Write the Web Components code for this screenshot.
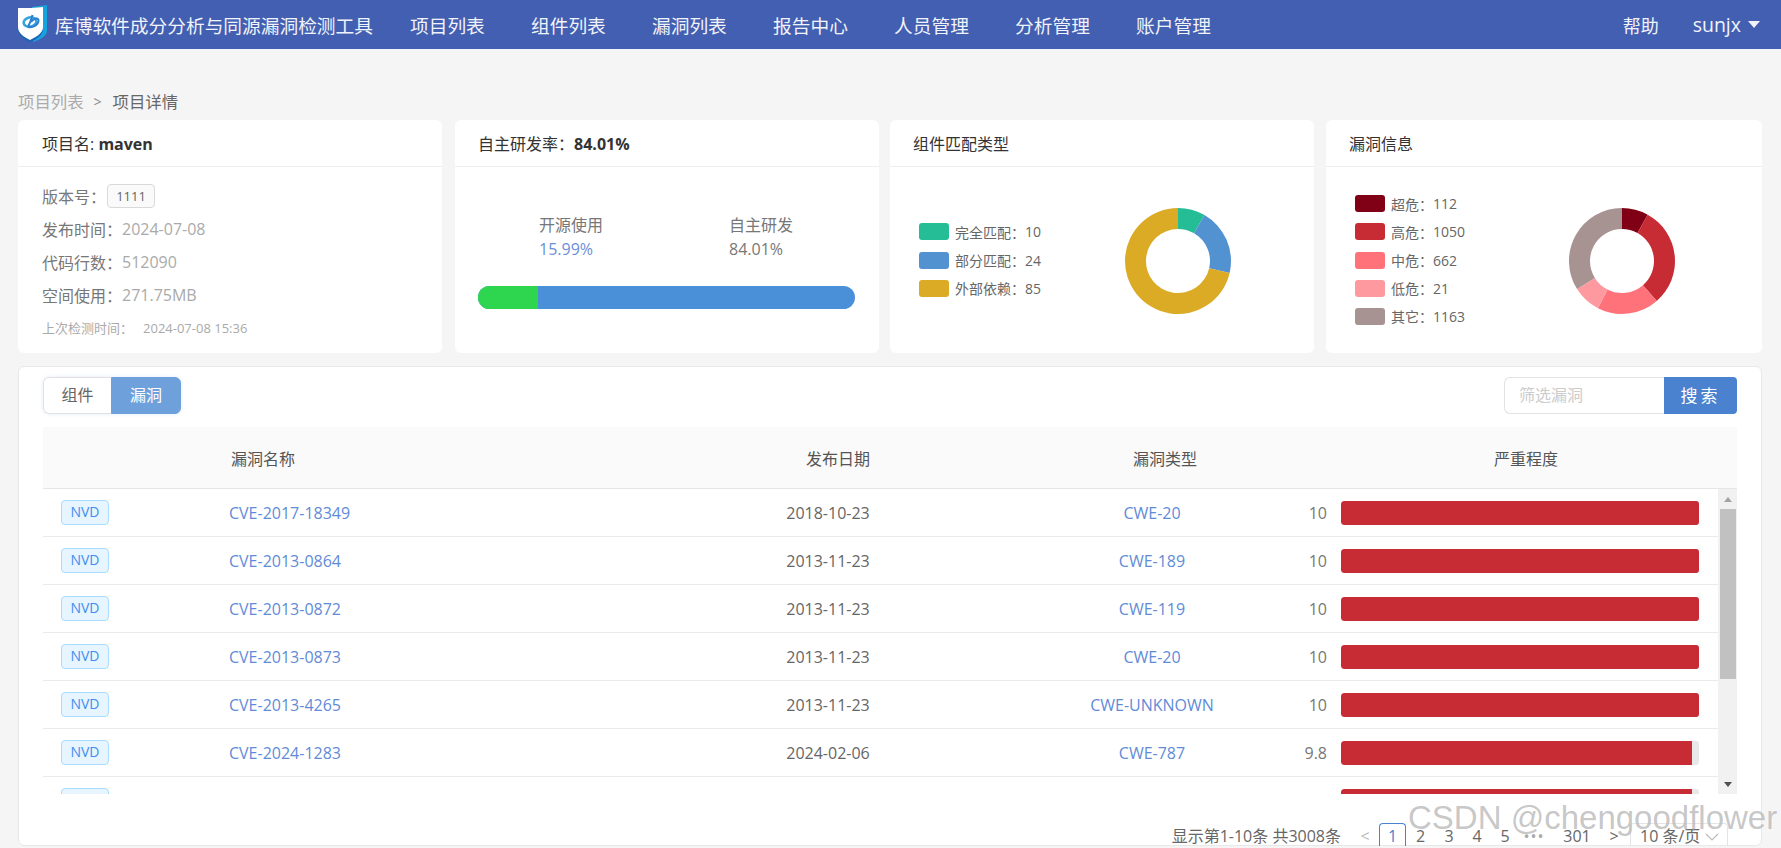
<!DOCTYPE html>
<html lang="zh-CN">
<head>
<meta charset="utf-8">
<title>项目详情</title>
<style>
    html, body {
        margin: 0;
        height: 848px;
        overflow: hidden;
        background: #f5f5f5;
        color: #666;
        font: 16px "Open Sans", "Noto Sans CJK SC", sans-serif;
    }
</style>
</head>
<body>
<app-header></app-header>
<bread-crumb></bread-crumb>
<summary-row>
    <info-card>
        <span slot="title">项目名: <b>maven</b></span>
        <project-info></project-info>
    </info-card>
    <info-card class="nudged" style="--head-pad: 23px">
        <span slot="title">自主研发率：<b>84.01%</b></span>
        <dev-rate></dev-rate>
    </info-card>
    <info-card style="--head-pad: 23px">
        <span slot="title">组件匹配类型</span>
        <donut-panel data-kind="match"></donut-panel>
    </info-card>
    <info-card style="--head-pad: 23px">
        <span slot="title">漏洞信息</span>
        <donut-panel data-kind="vuln"></donut-panel>
    </info-card>
</summary-row>
<vuln-panel></vuln-panel>
<water-mark></water-mark>

<script>
class AppHeader extends HTMLElement {
    constructor() {
        super()
        this.shadow = this.attachShadow({ mode: 'open' })
        var items = ['项目列表', '组件列表', '漏洞列表', '报告中心', '人员管理', '分析管理', '账户管理']
        this.shadow.innerHTML = `
<style>
    :host {
        display: flex;
        align-items: center;
        height: 49px;
        box-sizing: border-box;
        background: #435fb1;
        color: #f1f3fa;
        font-size: 18.72px;
    }
    svg { margin-left: 16px; flex: none; }
    .title { margin-left: 7px; }
    nav { display: flex; gap: 46.2px; margin-left: 37px; }
    .right { display: flex; align-items: center; margin-left: auto; padding-right: 21px; font-size: 18px; }
    .user { margin-left: 34px; font-size: 19.5px; }
    .caret {
        margin-left: 7px;
        border-left: 6px solid transparent;
        border-right: 6px solid transparent;
        border-top: 7px solid #f1f3fa;
    }
</style>
<svg width="32" height="40" viewBox="0 0 32 40">
    <path d="M16 2 L31 0 V26 C31 31 23 35 17 37 Z" fill="#14a3dc"/>
    <path d="M2 4 C10 4 20 3 27 2 V24 C27 30 20 35 14 37 C8 35 2 30 2 24 Z" fill="#1f63b5"/>
    <path d="M2 3 C10 3 20 3 27 2 V22 C27 28 20 32 14 35 C8 32 2 28 2 22 Z" fill="#fff"/>
    <ellipse cx="14" cy="17" rx="6.5" ry="4.6" fill="none" stroke="#35a5df" stroke-width="2.6" transform="rotate(-12 14 17)"/>
    <path d="M16.5 10 C15.5 14 14 18 12 22 M15 17 C18 13 23 12 22.5 16 C22 20 17 23 12 22" fill="none" stroke="#2a7fcf" stroke-width="2"/>
</svg>
<span class="title">库博软件成分分析与同源漏洞检测工具</span>
<nav>${items.map(item => `<span>${item}</span>`).join('')}</nav>
<div class="right">
    <span>帮助</span>
    <span class="user">sunjx</span>
    <span class="caret"></span>
</div>
`
    }
}

class BreadCrumb extends HTMLElement {
    constructor() {
        super()
        this.shadow = this.attachShadow({ mode: 'open' })
        this.shadow.innerHTML = `
<style>
    :host {
        display: flex;
        margin: 41px 0 6px 18px;
        height: 24px;
        line-height: 24px;
        font-size: 16.4px;
        color: #aaa;
    }
    .sep { margin: 0 11px 0 10px; color: #888; font-size: 14px; }
    .current { color: #666; }
</style>
<span>项目列表</span><span class="sep">&gt;</span><span class="current">项目详情</span>
`
    }
}

class SummaryRow extends HTMLElement {
    constructor() {
        super()
        this.shadow = this.attachShadow({ mode: 'open' })
        this.shadow.innerHTML = `
<style>
    :host {
        display: grid;
        grid-template-columns: 424px 424px 424px 436px;
        gap: 12px;
        margin-left: 18px;
        height: 233px;
    }
    /* the second card sits a pixel right of the even grid in the reference */
    ::slotted(.nudged) { margin: 0 -1px 0 1px; }
</style>
<slot></slot>
`
    }
}

class InfoCard extends HTMLElement {
    constructor() {
        super()
        this.shadow = this.attachShadow({ mode: 'open' })
        this.shadow.innerHTML = `
<style>
    :host {
        display: flex;
        flex-direction: column;
        background: #fff;
        border-radius: 6px;
        overflow: hidden;
    }
    .head {
        height: 46px;
        line-height: 48px;
        padding-left: var(--head-pad, 24px);
        border-bottom: 1px solid #eee;
        color: #333;
        flex: none;
    }
    ::slotted(span) { white-space: nowrap; font-weight: 400; }
    .body { flex: 1; min-height: 0; }
</style>
<div class="head"><slot name="title"></slot></div>
<div class="body"><slot></slot></div>
`
    }
}

class ProjectInfo extends HTMLElement {
    constructor() {
        super()
        this.shadow = this.attachShadow({ mode: 'open' })
        this.shadow.innerHTML = `
<style>
    :host { display: block; padding: 12px 0 0 24px; color: #777; }
    .row { display: flex; align-items: center; height: 33px; white-space: nowrap; }
    .val { color: #aaa; }
    .tag {
        box-sizing: border-box;
        width: 48px;
        height: 24px;
        line-height: 22px;
        margin-left: 1px;
        text-align: center;
        font-size: 13px;
        color: #666;
        background: #fafafa;
        border: 1px solid #d9d9d9;
        border-radius: 4px;
    }
    .last { font-size: 13px; color: #aaa; }
    .last span { margin-left: 10px; }
</style>
<div class="row">版本号：<span class="tag">1111</span></div>
<div class="row">发布时间：<span class="val">2024-07-08</span></div>
<div class="row">代码行数：<span class="val">512090</span></div>
<div class="row">空间使用：<span class="val">271.75MB</span></div>
<div class="row last">上次检测时间：<span>2024-07-08 15:36</span></div>
`
    }
}

class DevRate extends HTMLElement {
    constructor() {
        super()
        this.shadow = this.attachShadow({ mode: 'open' })
        this.shadow.innerHTML = `
<style>
    :host { display: block; padding: 46px 24px 0 23px; color: #777; }
    .cols { display: flex; padding-left: 61px; }
    .col { flex: none; width: 190px; line-height: 24px; }
    .blue { color: #6c8fd8; }
    .bar {
        display: flex;
        height: 23px;
        margin-top: 25px;
        border-radius: 12px;
        overflow: hidden;
        background: #4a90d9;
    }
    .bar i { display: block; width: 60px; background: #2dd64e; }
</style>
<div class="cols">
    <div class="col">开源使用<br><span class="blue">15.99%</span></div>
    <div class="col">自主研发<br>84.01%</div>
</div>
<div class="bar"><i></i></div>
`
    }
}

var donutData = {
    match: {
        pad: 81,
        slices: [
            { label: '完全匹配', value: 10, color: '#25bd96', end: 30 },
            { label: '部分匹配', value: 24, color: '#5292d0', end: 103 },
            { label: '外部依赖', value: 85, color: '#dcab25', end: 360 },
        ],
    },
    vuln: {
        pad: 85,
        slices: [
            { label: '超危', value: 112, color: '#800015', end: 29 },
            { label: '高危', value: 1050, color: '#c72b34', end: 139 },
            { label: '中危', value: 662, color: '#ff727a', end: 207 },
            { label: '低危', value: 21, color: '#ff99a0', end: 238 },
            { label: '其它', value: 1163, color: '#a69392', end: 360 },
        ],
    },
}

class DonutPanel extends HTMLElement {
    constructor() {
        super()
        this.shadow = this.attachShadow({ mode: 'open' })
    }

    // Angles are degrees clockwise from twelve o'clock.
    point(r, deg) {
        var rad = deg * Math.PI / 180
        return (55 + r * Math.sin(rad)).toFixed(2) + ' ' + (55 - r * Math.cos(rad)).toFixed(2)
    }

    slicePath(from, to) {
        var big = to - from > 180 ? 1 : 0
        return `M${this.point(53, from)} A53 53 0 ${big} 1 ${this.point(53, to)} L${this.point(32, to)} A32 32 0 ${big} 0 ${this.point(32, from)} Z`
    }

    connectedCallback() {
        var data = donutData[this.dataset.kind]
        var from = 0
        var paths = data.slices.map(slice => {
            var d = this.slicePath(from, slice.end)
            from = slice.end
            return `<path d="${d}" fill="${slice.color}"/>`
        }).join('')
        var legend = data.slices.map(slice => `
    <div class="item"><i style="background:${slice.color}"></i>${slice.label}：<span>${slice.value}</span></div>`).join('')
        this.shadow.innerHTML = `
<style>
    :host {
        display: flex;
        align-items: center;
        justify-content: space-between;
        height: 186px;
        padding: 0 ${data.pad}px 0 29px;
        font-size: 14px;
        color: #666;
    }
    .item { display: flex; align-items: center; height: 28.2px; white-space: nowrap; }
    i { width: 30px; height: 17px; margin-right: 6px; border-radius: 3px; }
    svg { display: block; margin-top: 2px; }
</style>
<div>${legend}</div>
<svg width="110" height="110" viewBox="0 0 110 110">${paths}</svg>
`
    }
}

class VulnRow extends HTMLElement {
    constructor() {
        super()
        this.shadow = this.attachShadow({ mode: 'open' })
    }

    connectedCallback() {
        var score = this.getAttribute('score')
        var cve = this.getAttribute('cve')
        this.shadow.innerHTML = `
<style>
    :host {
        display: grid;
        grid-template-columns: 186px 400px 398px 250px 50px 358px;
        align-items: center;
        height: 48px;
        box-sizing: border-box;
        padding-right: 19px;
        border-bottom: 1px solid #eaeaea;
        flex: none;
    }
    .tag {
        box-sizing: border-box;
        width: 48px;
        height: 25px;
        line-height: 22px;
        margin-left: 18px;
        text-align: center;
        font-size: 14px;
        color: #3f8ef0;
        background: #e6f5ff;
        border: 1px solid #a9dcff;
        border-radius: 4px;
    }
    .link { color: #5f8bd8; white-space: nowrap; }
    .center { text-align: center; }
    .score { text-align: right; color: #777; }
    .track { height: 24px; margin-left: 14px; width: 358px; background: #e8e8e8; border-radius: 3px; overflow: hidden; }
    .fill { height: 100%; background: #c72b34; border-radius: 3px 0 0 3px; }
</style>
<span class="tag">${cve ? 'NVD' : ''}</span>
<span class="link">${cve}</span>
<span class="center">${this.getAttribute('date')}</span>
<span class="link center">${this.getAttribute('cwe')}</span>
<span class="score">${cve ? score : ''}</span>
<div class="track"><div class="fill" style="width:${score * 10}%"></div></div>
`
    }
}

class ScrollRail extends HTMLElement {
    constructor() {
        super()
        this.shadow = this.attachShadow({ mode: 'open' })
        this.shadow.innerHTML = `
<style>
    :host {
        display: flex;
        flex-direction: column;
        align-items: center;
        width: 19px;
        flex: none;
        background: #f1f1f1;
    }
    .arrow { height: 20px; display: flex; align-items: center; justify-content: center; }
    .arrow i { border-left: 4px solid transparent; border-right: 4px solid transparent; }
    .up i { border-bottom: 5px solid #a3a3a3; }
    .down i { border-top: 5px solid #505050; }
    .thumb { width: 16px; height: 170px; background: #c1c1c1; }
    .gap { flex: 1; }
</style>
<div class="arrow up"><i></i></div>
<div class="thumb"></div>
<div class="gap"></div>
<div class="arrow down"><i></i></div>
`
    }
}

class PagerBar extends HTMLElement {
    constructor() {
        super()
        this.shadow = this.attachShadow({ mode: 'open' })
        this.shadow.innerHTML = `
<style>
    :host {
        display: flex;
        justify-content: flex-end;
        align-items: flex-start;
        height: 23px;
        margin-top: 29px;
        margin-right: 9px;
        line-height: 18px;
        color: #666;
        white-space: nowrap;
    }
    .total { margin-right: 10px; padding-top: 4px; }
    .item { text-align: center; width: 28px; padding-top: 4px; }
    .cur {
        box-sizing: border-box;
        width: 27px;
        height: 23px;
        padding-top: 3px;
        color: #4a82cf;
        border: 1px solid #4a82cf;
        border-bottom: 0;
        border-radius: 4px 4px 0 0;
    }
    .off { color: #bbb; }
    .more { width: 30px; letter-spacing: 1px; color: #aaa; }
    .wide { width: 56px; }
    .next { width: 18px; margin-right: 7px; }
    .select {
        box-sizing: border-box;
        width: 98px;
        height: 23px;
        padding: 3px 0 0 9px;
        border: 1px solid #e4e4e4;
        border-bottom: 0;
        border-radius: 4px 4px 0 0;
        display: flex;
        gap: 5px;
    }
    svg { margin-top: 5px; }
</style>
<span class="total">显示第1-10条 共3008条</span>
<span class="item off">&lt;</span>
<span class="item cur">1</span>
<span class="item" style="width:29px">2</span>
<span class="item">3</span>
<span class="item">4</span>
<span class="item">5</span>
<span class="item more">•••</span>
<span class="item wide">301</span>
<span class="item next">&gt;</span>
<div class="select">
    <span>10 条/页</span>
    <svg width="14" height="10" viewBox="0 0 14 10"><path d="M1 2 L7 8 L13 2" fill="none" stroke="#bbb" stroke-width="1.2"/></svg>
</div>
`
    }
}

class VulnPanel extends HTMLElement {
    constructor() {
        super()
        this.shadow = this.attachShadow({ mode: 'open' })
        var rows = [
            ['CVE-2017-18349', '2018-10-23', 'CWE-20', '10'],
            ['CVE-2013-0864', '2013-11-23', 'CWE-189', '10'],
            ['CVE-2013-0872', '2013-11-23', 'CWE-119', '10'],
            ['CVE-2013-0873', '2013-11-23', 'CWE-20', '10'],
            ['CVE-2013-4265', '2013-11-23', 'CWE-UNKNOWN', '10'],
            ['CVE-2024-1283', '2024-02-06', 'CWE-787', '9.8'],
            ['', '', '', '9.8'],
        ]
        this.shadow.innerHTML = `
<style>
    :host {
        display: block;
        box-sizing: border-box;
        width: 1744px;
        height: 480px;
        margin: 13px 0 0 18px;
        padding: 10px 24px 0;
        background: #fff;
        border: 1px solid #e8e8e8;
        border-radius: 6px;
    }
    .tools { display: flex; justify-content: space-between; height: 37px; }
    .tabs { display: flex; box-shadow: 0 0 4px rgba(110, 160, 220, .2); border-radius: 6px; }
    .tab {
        box-sizing: border-box;
        width: 68px;
        line-height: 35px;
        text-align: center;
        border: 1px solid #e2e2e2;
        border-right: 0;
        border-radius: 6px 0 0 6px;
    }
    .tab.on {
        width: 70px;
        color: #fff;
        background: #6ea0dc;
        border: 1px solid #6ea0dc;
        border-radius: 0 6px 6px 0;
    }
    .search { display: flex; }
    .input {
        box-sizing: border-box;
        width: 160px;
        padding-left: 14px;
        line-height: 35px;
        color: #ccc;
        border: 1px solid #e2e2e2;
        border-right: 0;
        border-radius: 6px 0 0 6px;
    }
    .btn {
        width: 73px;
        line-height: 37px;
        text-align: center;
        font-size: 17px;
        letter-spacing: 3px;
        color: #fff;
        background: #4a82cf;
        border-radius: 0 4px 4px 0;
    }
    .thead {
        display: grid;
        grid-template-columns: 188px 380px 454px 200px 472px;
        align-items: center;
        height: 62px;
        box-sizing: border-box;
        margin-top: 13px;
        background: #fafafa;
        border-bottom: 1px solid #e6e6e6;
        color: #555;
    }
    .thead span { text-align: center; }
    .thead span:nth-child(2) { text-align: left; }
    .thead span:last-child { padding-left: 50px; }
    .tbody { display: flex; height: 305px; overflow: hidden; }
    .rows { display: flex; flex-direction: column; flex: 1; min-width: 0; }
</style>
<div class="tools">
    <div class="tabs"><span class="tab">组件</span><span class="tab on">漏洞</span></div>
    <div class="search"><span class="input">筛选漏洞</span><span class="btn">搜索</span></div>
</div>
<div class="thead">
    <span></span><span>漏洞名称</span><span>发布日期</span><span>漏洞类型</span><span>严重程度</span>
</div>
<div class="tbody">
    <div class="rows">
        ${rows.map(row => `<vuln-row cve="${row[0]}" date="${row[1]}" cwe="${row[2]}" score="${row[3]}"></vuln-row>`).join('')}
    </div>
    <scroll-rail></scroll-rail>
</div>
<pager-bar></pager-bar>
`
    }
}

// The CSDN stamp sits over the finished screenshot, so it is the one overlay here.
class WaterMark extends HTMLElement {
    constructor() {
        super()
        this.shadow = this.attachShadow({ mode: 'open' })
        this.shadow.innerHTML = `
<style>
    :host {
        position: absolute;
        left: 1408px;
        top: 799px;
        font: 33px "Liberation Sans", sans-serif;
        color: rgba(120, 120, 120, .42);
        text-shadow: 0 0 2px rgba(255, 255, 255, .8);
        white-space: nowrap;
    }
</style>
CSDN @chengoodflower
`
    }
}

window.customElements.define('app-header', AppHeader)
window.customElements.define('bread-crumb', BreadCrumb)
window.customElements.define('summary-row', SummaryRow)
window.customElements.define('info-card', InfoCard)
window.customElements.define('project-info', ProjectInfo)
window.customElements.define('dev-rate', DevRate)
window.customElements.define('donut-panel', DonutPanel)
window.customElements.define('vuln-row', VulnRow)
window.customElements.define('scroll-rail', ScrollRail)
window.customElements.define('pager-bar', PagerBar)
window.customElements.define('vuln-panel', VulnPanel)
window.customElements.define('water-mark', WaterMark)
</script>
</body>
</html>
